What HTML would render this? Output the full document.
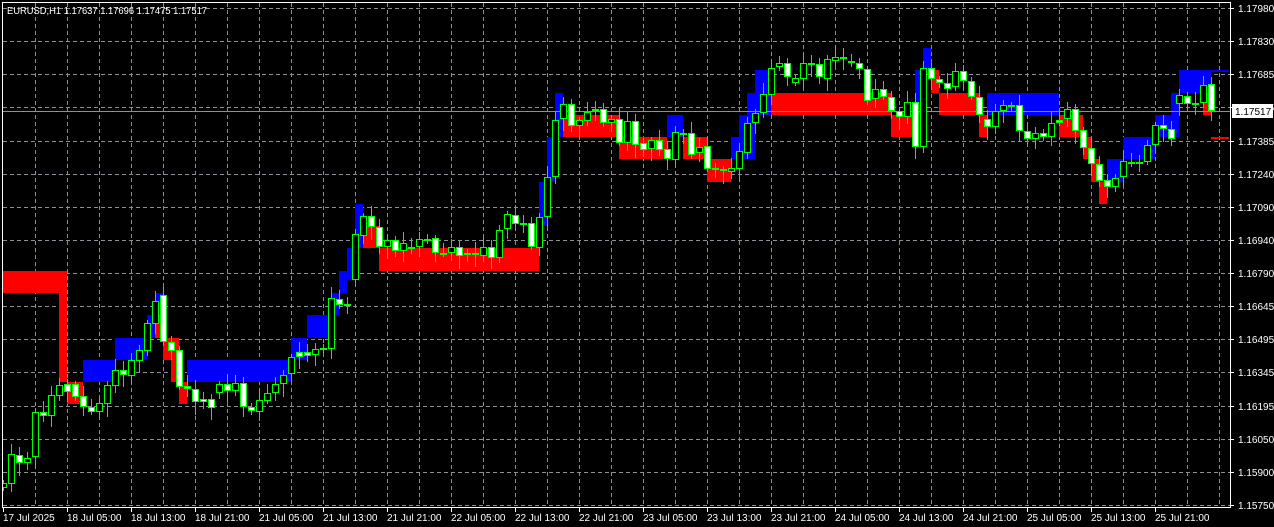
<!DOCTYPE html>
<html><head><meta charset="utf-8"><style>
html,body{margin:0;padding:0;background:#000;width:1274px;height:527px;overflow:hidden}
svg{display:block}
text{font-family:"Liberation Sans",sans-serif;font-size:10px;fill:#fff}
</style></head><body>
<svg id="s" width="1274" height="527" xmlns="http://www.w3.org/2000/svg" shape-rendering="crispEdges">
<rect width="1274" height="527" fill="#000"/>
<g id="grid"></g>
<g id="blocks"></g>
<line x1="3" y1="111.5" x2="1230" y2="111.5" stroke="#8a9099"/>
<g id="candles"></g>
<g id="axes"></g>
<text x="7" y="14" textLength="200" lengthAdjust="spacingAndGlyphs">EURUSD,H1  1.17637 1.17696 1.17475 1.17517</text>
</svg>
<script>
var NS="http://www.w3.org/2000/svg";
function el(p,t,a,txt){var e=document.createElementNS(NS,t);for(var k in a)e.setAttribute(k,a[k]);if(txt)e.textContent=txt;document.getElementById(p).appendChild(e);return e;}
for(var k=0;k<16;k++){var y=Math.round(8+k*33.13)+0.5;el('grid','line',{x1:3,x2:1230,y1:y,y2:y,stroke:'#8a9099','stroke-dasharray':'4,3'});}
for(var x=35;x<1230;x+=32){el('grid','line',{x1:x+0.5,x2:x+0.5,y1:3,y2:507,stroke:'#8a9099','stroke-dasharray':'4,3'});}
var R='#ff0000',B='#0000ff';
var bl=[[3,67,271,293,R],[59,67,293,382,R],[67,83,382,404,R],[83,115,360,382,B],[115,147,338,360,B],[147,155,315,338,B],[155,163,293,315,B],[155,163,315,338,R],[163,179,338,360,R],[171,179,360,382,R],[179,187,382,404,R],[187,291,360,382,B],[291,307,338,360,B],[307,331,315,338,B],[331,339,293,315,B],[339,347,271,293,B],[339,355,271,280,B],[347,355,248,280,B],[355,363,204,248,B],[363,379,226,248,R],[379,539,248,271,R],[531,539,226,248,B],[539,547,182,226,B],[547,555,137,182,B],[555,563,93,137,B],[563,619,115,137,R],[619,667,137,159,R],[667,683,115,137,B],[683,707,137,159,R],[707,731,159,182,R],[731,739,137,159,B],[739,747,115,159,B],[747,755,93,159,B],[755,771,70,115,B],[771,891,93,115,R],[891,915,115,137,R],[915,923,70,115,B],[923,931,48,70,B],[931,939,70,93,R],[939,979,93,115,R],[979,987,115,137,R],[987,1059,93,115,B],[1059,1083,115,137,R],[1083,1091,137,159,R],[1091,1099,159,182,R],[1099,1107,182,204,R],[1107,1123,159,182,B],[1123,1155,137,159,B],[1155,1179,115,137,B],[1171,1179,93,115,B],[1179,1211,70,93,B],[1203,1211,93,115,R],[1211,1229,70,72,B],[1211,1229,137,139,R]];
bl.forEach(function(b){el('blocks','rect',{x:b[0],y:b[2],width:b[1]-b[0],height:b[3]-b[2],fill:b[4]});});
var c=[[3,483,488,0],[11,454,484,0],[19,455,463,1],[27,458,463,0],[35,412,457,0],[43,412,416,1],[51,395,416,0],[59,385,396,0],[67,384,392,1],[75,384,397,1],[83,396,407,1],[91,407,412,1],[99,403,412,0],[107,385,404,0],[115,370,386,0],[123,370,375,1],[131,360,376,0],[139,350,361,0],[147,323,351,0],[155,301,324,0],[163,295,342,1],[171,342,351,1],[179,350,387,1],[187,386,389,1],[195,389,402,1],[203,399,402,1],[211,399,408,1],[219,384,393,0],[227,384,391,1],[235,383,391,0],[243,383,407,1],[251,407,411,1],[259,400,412,0],[267,393,401,0],[275,384,393,0],[283,375,384,0],[291,357,374,0],[299,352,357,1],[307,352,356,1],[315,349,355,0],[323,348,349,0],[331,298,349,0],[339,299,305,1],[347,304,305,0],[355,234,280,0],[363,216,236,0],[371,216,227,1],[379,227,247,1],[387,240,247,0],[395,240,251,1],[403,243,251,0],[411,247,249,1],[419,239,247,0],[427,239,240,0],[435,238,253,1],[443,253,254,0],[451,247,253,0],[459,247,256,1],[467,253,255,1],[475,253,255,1],[483,247,256,0],[491,247,258,1],[499,230,258,0],[507,214,229,0],[515,215,224,1],[523,223,224,0],[531,223,247,1],[539,217,248,0],[547,177,217,0],[555,120,177,0],[563,104,119,0],[571,104,126,1],[579,120,126,0],[587,112,121,0],[595,109,111,1],[603,109,123,1],[611,119,123,0],[619,119,143,1],[627,121,143,0],[635,121,145,1],[643,143,150,1],[651,140,149,0],[659,140,150,1],[667,149,159,1],[675,132,160,0],[683,133,134,0],[691,133,155,1],[699,147,153,0],[707,146,169,1],[715,168,170,1],[723,169,171,1],[731,168,172,0],[739,151,169,0],[747,123,153,0],[755,113,123,0],[763,94,113,0],[771,68,95,0],[779,63,67,0],[787,63,77,1],[795,78,83,0],[803,63,79,0],[811,63,64,0],[819,64,77,1],[827,59,79,0],[835,57,61,0],[843,57,59,1],[851,61,62,1],[859,63,69,1],[867,69,101,1],[875,89,99,0],[883,89,97,1],[891,97,111,1],[899,111,117,1],[907,102,117,0],[915,102,147,1],[923,68,147,0],[931,68,79,1],[939,79,83,1],[947,83,89,1],[955,71,87,0],[963,71,81,1],[971,81,97,1],[979,97,115,1],[987,119,127,1],[995,111,127,0],[1003,105,111,0],[1011,105,106,0],[1019,105,131,1],[1027,131,139,1],[1035,133,139,0],[1043,133,137,1],[1051,123,137,0],[1059,120,123,1],[1067,109,119,0],[1075,109,131,1],[1083,130,148,1],[1091,148,164,1],[1099,164,181,1],[1107,180,187,1],[1115,178,187,0],[1123,161,177,0],[1131,162,163,0],[1139,162,163,0],[1147,145,162,0],[1155,125,145,0],[1163,125,129,1],[1171,129,139,1],[1179,95,104,0],[1187,96,104,1],[1195,103,104,0],[1203,85,103,0],[1211,84,111,1]];
var G='#00ff00';
c.forEach(function(d,i){var cx=d[0],t=d[1],b=d[2];var h=b-t;
 var w1=3+((i*7)%9),w2=3+((i*5)%11);
 el('candles','rect',{x:cx,y:t-w1,width:1,height:h+w1+w2,fill:G});
 if(h<=2){el('candles','rect',{x:cx-3,y:t,width:7,height:2,fill:G});}
 else{el('candles','rect',{x:cx-3,y:t,width:7,height:h,fill:G});
  el('candles','rect',{x:cx-2,y:t+1,width:5,height:h-2,fill:d[3]?'#fff':'#000'});}
});
el('axes','rect',{x:0,y:0,width:3,height:527,fill:'#000'});
el('axes','rect',{x:1231,y:0,width:43,height:527,fill:'#000'});
el('axes','rect',{x:0,y:508,width:1231,height:19,fill:'#000'});
el('axes','line',{x1:2.5,y1:2,x2:2.5,y2:508,stroke:'#fff'});
el('axes','line',{x1:2,y1:2.5,x2:1231,y2:2.5,stroke:'#fff'});
el('axes','line',{x1:1230.5,y1:2,x2:1230.5,y2:508,stroke:'#fff'});
el('axes','line',{x1:2,y1:507.5,x2:1231,y2:507.5,stroke:'#fff'});
var pr=['1.17980','1.17830','1.17685','1.17535','1.17385','1.17240','1.17090','1.16940','1.16790','1.16645','1.16495','1.16345','1.16195','1.16050','1.15900','1.15750'];
pr.forEach(function(p,k){var y=Math.round(8+k*33.13);el('axes','line',{x1:1231,x2:1234,y1:y+0.5,y2:y+0.5,stroke:'#fff'});el('axes','text',{x:1238,y:y+4},p);});
el('axes','rect',{x:1232,y:104,width:41,height:14,fill:'#fff'});
el('axes','text',{x:1235,y:115,style:'fill:#000'},'1.17517');
var tl=['17 Jul 2025','18 Jul 05:00','18 Jul 13:00','18 Jul 21:00','21 Jul 05:00','21 Jul 13:00','21 Jul 21:00','22 Jul 05:00','22 Jul 13:00','22 Jul 21:00','23 Jul 05:00','23 Jul 13:00','23 Jul 21:00','24 Jul 05:00','24 Jul 13:00','24 Jul 21:00','25 Jul 05:00','25 Jul 13:00','25 Jul 21:00'];
tl.forEach(function(t,k){var x=3+64*k;el('axes','line',{x1:x+0.5,x2:x+0.5,y1:508,y2:512,stroke:'#fff'});el('axes','text',{x:x,y:521},t);});
</script>
</body></html>
